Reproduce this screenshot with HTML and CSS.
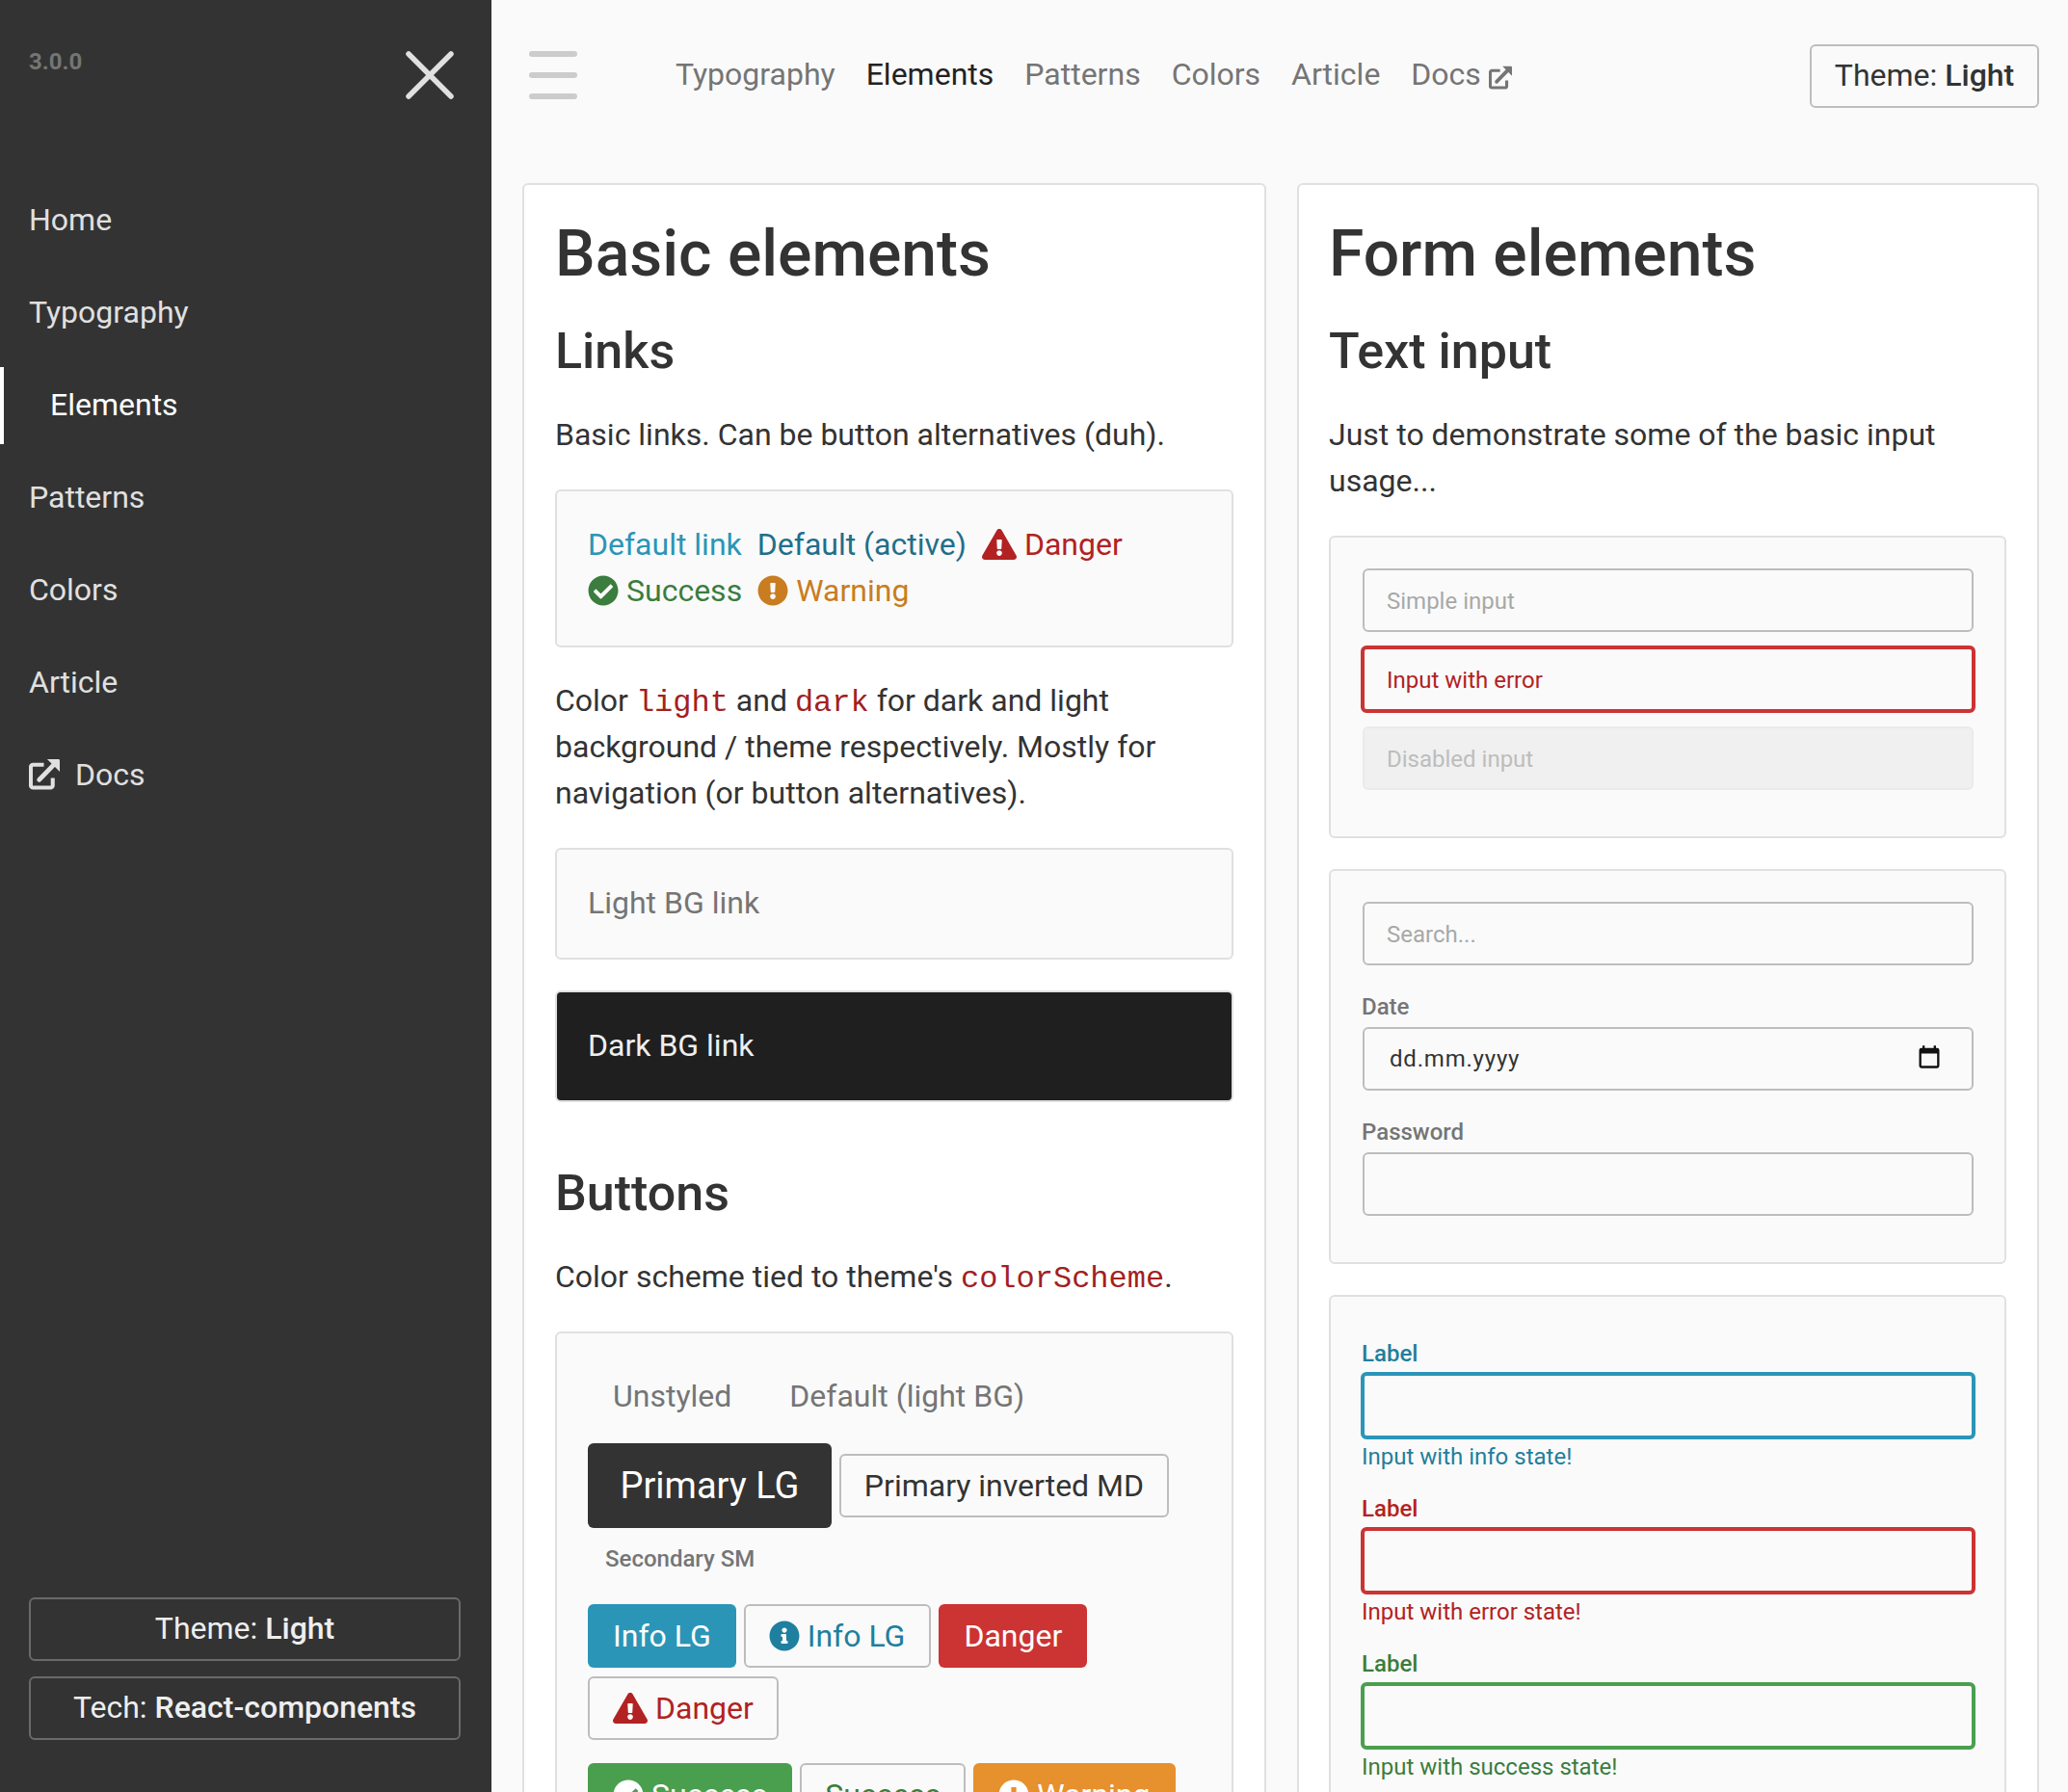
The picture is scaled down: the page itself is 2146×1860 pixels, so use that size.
FILE: index.html
```html
<!DOCTYPE html>
<html lang="en">
<head>
<meta charset="utf-8">
<title>Elements</title>
<link rel="stylesheet" href="styles.css">
</head>
<body>
<svg class="defs" aria-hidden="true">
  <symbol id="i-check" viewBox="0 0 512 512"><path fill="currentColor" d="M504 256c0 136.967-111.033 248-248 248S8 392.967 8 256 119.033 8 256 8s248 111.033 248 248zM227.314 387.314l184-184c6.248-6.248 6.248-16.379 0-22.627l-22.627-22.627c-6.248-6.249-16.379-6.249-22.628 0L216 308.118l-70.059-70.059c-6.248-6.248-16.379-6.248-22.628 0l-22.627 22.627c-6.248 6.248-6.248 16.379 0 22.627l104 104c6.249 6.249 16.379 6.249 22.628.001z"/></symbol>
  <symbol id="i-warn" viewBox="0 0 512 512"><path fill="currentColor" d="M504 256c0 136.997-111.043 248-248 248S8 392.997 8 256C8 119.083 119.043 8 256 8s248 111.083 248 248zm-248 50c-25.405 0-46 20.595-46 46s20.595 46 46 46 46-20.595 46-46-20.595-46-46-46zm-43.673-165.346l7.418 136c.347 6.364 5.609 11.346 11.982 11.346h48.546c6.373 0 11.635-4.982 11.982-11.346l7.418-136c.375-6.874-5.098-12.654-11.982-12.654h-63.383c-6.884 0-12.356 5.78-11.981 12.654z"/></symbol>
  <symbol id="i-tri" viewBox="0 0 576 512"><path fill="currentColor" d="M569.517 440.013C587.975 472.007 564.806 512 527.94 512H48.054c-36.937 0-59.999-40.055-41.577-71.987L246.423 23.985c18.467-32.009 64.72-31.951 83.154 0l239.94 416.028zM288 354c-25.405 0-46 20.595-46 46s20.595 46 46 46 46-20.595 46-46-20.595-46-46-46zm-43.673-165.346l7.418 136c.347 6.364 5.609 11.346 11.982 11.346h48.546c6.373 0 11.635-4.982 11.982-11.346l7.418-136c.375-6.874-5.098-12.654-11.982-12.654h-63.383c-6.884 0-12.356 5.78-11.981 12.654z"/></symbol>
  <symbol id="i-info" viewBox="0 0 512 512"><path fill="currentColor" d="M256 8C119.043 8 8 119.083 8 256c0 136.997 111.043 248 248 248s248-111.003 248-248C504 119.083 392.957 8 256 8zm0 110c23.196 0 42 18.804 42 42s-18.804 42-42 42-42-18.804-42-42 18.804-42 42-42zm56 254c0 6.627-5.373 12-12 12h-88c-6.627 0-12-5.373-12-12v-24c0-6.627 5.373-12 12-12h12v-64h-12c-6.627 0-12-5.373-12-12v-24c0-6.627 5.373-12 12-12h64c6.627 0 12 5.373 12 12v100h12c6.627 0 12 5.373 12 12v24z"/></symbol>
  <symbol id="i-ext" viewBox="0 0 33 34"><path fill="none" stroke="currentColor" stroke-width="4.200" d="M16 7H4.500A2.500 2.500 0 0 0 2 9.500V29A2.500 2.500 0 0 0 4.500 31.500H23A2.500 2.500 0 0 0 25.500 29V21"/><path fill="none" stroke="currentColor" stroke-width="5" stroke-linecap="round" d="M11 23 27 6.500"/><path fill="currentColor" d="M19.500 1H31.500A1.500 1.500 0 0 1 33 2.500V14.500Z"/></symbol>
</svg>
<div class="app">
  <aside class="sidebar">
    <div class="side-top">
      <span class="version">3.0.0</span>
      <svg class="close" viewBox="0 0 50 50" aria-hidden="true"><path d="M3 3 47 47M47 3 3 47"/></svg>
    </div>
    <nav class="side-nav">
      <a class="side-link">Home</a>
      <a class="side-link">Typography</a>
      <a class="side-link active">Elements</a>
      <a class="side-link">Patterns</a>
      <a class="side-link">Colors</a>
      <a class="side-link">Article</a>
      <a class="side-link"><svg class="ic-side"><use href="#i-ext"/></svg>Docs</a>
    </nav>
    <div class="side-bottom">
      <button class="btn side-btn">Theme: <b>Light</b></button>
      <button class="btn side-btn">Tech: <b>React-components</b></button>
    </div>
  </aside>
  <div class="main">
    <header class="topbar">
      <div class="burger"><i></i><i></i><i></i></div>
      <nav class="top-nav">
        <a>Typography</a>
        <a class="current">Elements</a>
        <a>Patterns</a>
        <a>Colors</a>
        <a>Article</a>
        <a class="docs">Docs<svg class="ic-top"><use href="#i-ext"/></svg></a>
      </nav>
      <button class="btn outline theme">Theme: <b>Light</b></button>
    </header>
    <div class="columns">
      <section class="card">
        <h1>Basic elements</h1>
        <h2>Links</h2>
        <p>Basic links. Can be button alternatives (duh).</p>
        <div class="box links">
          <a class="c-info">Default link</a>
          <a class="c-active">Default (active)</a>
          <a class="c-danger"><svg class="ic tri"><use href="#i-tri"/></svg>Danger</a>
          <a class="c-success"><svg class="ic"><use href="#i-check"/></svg>Success</a>
          <a class="c-warning"><svg class="ic"><use href="#i-warn"/></svg>Warning</a>
        </div>
        <p>Color <code>light</code> and <code>dark</code> for dark and light background / theme respectively. Mostly for navigation (or button alternatives).</p>
        <div class="box"><a class="c-muted">Light BG link</a></div>
        <div class="box dark"><a>Dark BG link</a></div>
        <h2 class="h-buttons">Buttons</h2>
        <p>Color scheme tied to theme's <code>colorScheme</code>.</p>
        <div class="box buttons">
          <div class="row r-plain">
            <button class="btn plain">Unstyled</button>
            <button class="btn plain">Default (light BG)</button>
          </div>
          <div class="row r-primary">
            <button class="btn lg primary">Primary LG</button>
            <button class="btn outline">Primary inverted MD</button>
          </div>
          <div class="row r-sm"><button class="btn sm">Secondary SM</button></div>
          <div class="row r-state">
            <button class="btn f-info">Info LG</button>
            <button class="btn outline t-info"><svg class="ic"><use href="#i-info"/></svg>Info LG</button>
            <button class="btn f-danger">Danger</button>
            <button class="btn outline t-danger"><svg class="ic tri"><use href="#i-tri"/></svg>Danger</button>
          </div>
          <div class="row r-state">
            <button class="btn f-success"><svg class="ic"><use href="#i-check"/></svg>Success</button>
            <button class="btn outline t-success">Success</button>
            <button class="btn f-warning"><svg class="ic"><use href="#i-warn"/></svg>Warning</button>
          </div>
        </div>
      </section>
      <section class="card card-form">
        <h1>Form elements</h1>
        <h2>Text input</h2>
        <p>Just to demonstrate some of the basic input usage...</p>
        <div class="box form">
          <input class="input" placeholder="Simple input">
          <input class="input error" placeholder="Input with error">
          <input class="input" placeholder="Disabled input" disabled>
        </div>
        <div class="box form">
          <input class="input search" placeholder="Search...">
          <label class="label">Date</label>
          <div class="input date"><span>dd.mm.yyyy</span>
            <svg class="cal" viewBox="0 0 24 24" aria-hidden="true"><path d="M19 4h-1V2h-2v2H8V2H6v2H5a2 2 0 0 0-2 2v14a2 2 0 0 0 2 2h14a2 2 0 0 0 2-2V6a2 2 0 0 0-2-2zm0 16H5V9h14z"/></svg>
          </div>
          <label class="label">Password</label>
          <input class="input" type="password">
        </div>
        <div class="box form states">
          <div class="field s-info">
            <label class="label">Label</label>
            <input class="input">
            <span class="hint">Input with info state!</span>
          </div>
          <div class="field s-error">
            <label class="label">Label</label>
            <input class="input">
            <span class="hint">Input with error state!</span>
          </div>
          <div class="field s-success">
            <label class="label">Label</label>
            <input class="input">
            <span class="hint">Input with success state!</span>
          </div>
        </div>
      </section>
    </div>
  </div>
</div>
</body>
</html>
```

FILE: styles.css
```css
* { box-sizing: border-box; }
html, body { margin: 0; height: 1860px; overflow: hidden; }
body { background: #fafafa; color: #333; font: 32px/48px Roboto, sans-serif; }
.defs { display: none; }
.app { display: flex; height: 1860px; overflow: hidden; }

.sidebar { flex: 0 0 510px; background: #333; color: #e0e0e0; display: flex; flex-direction: column; padding: 0 32px 54px 0; }
.side-top { display: flex; justify-content: space-between; align-items: flex-start; padding: 41px 0 0 30px; height: 180px; }
.version { font-size: 24px; font-weight: 700; line-height: 46px; color: #757575; }
.close { width: 50px; height: 50px; margin: 12px 7px 0 0; stroke: #e0e0e0; stroke-width: 5.500; stroke-linecap: round; fill: none; }
.side-nav { display: flex; flex-direction: column; gap: 16px; margin-top: 9px; }
.side-link { display: flex; align-items: center; height: 80px; padding: 0 0 2px 30px; color: #e0e0e0; }
.side-link.active { color: #fff; border-left: 4px solid #fff; padding-left: 48px; }
.ic-side { width: 32px; height: 33px; margin: -2px 16px 0 0; }
.side-bottom { margin-top: auto; display: flex; flex-direction: column; gap: 16px; padding-left: 30px; }

.btn { font: inherit; border: 2px solid transparent; border-radius: 6px; background: none; padding: 6px 24px; color: #757575; display: inline-flex; align-items: center; justify-content: center; white-space: nowrap; }
.btn b { font-weight: 500; }
.side-btn { color: #eee; border-color: #6a6a6a; height: 66px; width: 448px; padding: 0 24px 2px; white-space: pre; }
.outline { border-color: #bdbdbd; color: #333; height: 66px; }
.ic { width: 32px; height: 32px; margin-right: 8px; flex: none; }
.ic.tri { width: 36px; }

.main { flex: 1; min-width: 0; padding: 0 30px 0 32px; }
.topbar { height: 190px; display: flex; align-items: flex-start; }
.burger { width: 50px; height: 50px; margin: 53px 0 0 7px; display: flex; flex-direction: column; justify-content: space-between; }
.burger i { display: block; height: 6px; border-radius: 3px; background: #ccc; }
.top-nav { display: flex; gap: 32px; margin: 53px 0 0 102px; color: #757575; }
.top-nav .current { color: #222; }
.docs { display: flex; align-items: center; }
.ic-top { width: 24px; height: 25px; margin: 6px 0 0 8px; }
.theme { margin: 46px 0 0 auto; width: 238px; height: 66px; padding: 0 24px 2px; white-space: pre; }

.columns { display: grid; grid-template-columns: 772px 770px; gap: 32px; align-items: start; }
.card { background: #fff; border: 2px solid #e0e0e0; border-radius: 6px; padding: 32px; min-height: 1700px; }
.card-form { padding-left: 31px; }
h1 { font-size: 66px; line-height: 80px; font-weight: 500; margin: 0 0 31px; }
h2 { font-size: 52px; line-height: 60px; font-weight: 500; margin: 0 0 32px; }
p { margin: 0 0 33px; }
code { font: 32px/1 "Liberation Mono", monospace; color: #a32020; }

.box { background: #fafafa; border: 2px solid #e0e0e0; border-radius: 6px; padding: 31px 32px 33px; margin-bottom: 32px; }
.links { display: flex; flex-wrap: wrap; column-gap: 16px; margin-bottom: 31px; }
.links a { display: flex; align-items: center; }
.dark { background: #1f1f1f; color: #eee; }
.c-muted { color: #757575; }
.c-info { color: #2b95b7; }
.c-active { color: #1f6f8b; }
.c-danger { color: #b22222; }
.c-success { color: #3a7d3e; }
.c-warning { color: #c97d20; }
.h-buttons { margin-top: 65px; }

.buttons { margin-top: 1px; padding: 32px; }
.row { display: flex; flex-wrap: wrap; gap: 9px 8px; align-items: center; }
.plain { height: 66px; }
.r-primary { margin-top: 16px; }
.lg { font-size: 38px; height: 88px; padding: 0 31.500px; }
.primary { background: #333; color: #fff; }
.r-sm { margin: 8px 0 -1px; }
.sm { font-size: 24px; font-weight: 500; height: 48px; padding: 0 16px; }
.r-state { margin: 24px 0 0; }
.r-state .btn { height: 66px; }
.f-info { background: #2b95b7; color: #fff; }
.f-danger { background: #cc3333; color: #fff; }
.f-success { background: #4a9f4f; color: #fff; }
.f-warning { background: #e6902e; color: #fff; }
.btn.t-info { color: #1f7f9e; padding-right: 25px; }
.btn.t-danger { color: #b22222; }
.btn.t-success { color: #3a7d3e; }

.form { display: flex; flex-direction: column; padding: 32px 32px 48px 33px; }
.input { display: flex; align-items: center; width: 100%; height: 66px; font: 24px/36px Roboto, sans-serif; color: #333; background: #fafafa; border: 2px solid #bdbdbd; border-radius: 6px; padding: 2px 23px 0; margin: 0 0 16px; outline: none; }
.input::placeholder { color: #a8a8a8; opacity: 1; }
.form > .input:last-child { margin-bottom: 0; }
.input.error { border: 4px solid #cc3333; height: 70px; width: calc(100% + 4px); margin: -2px -2px 14px; padding: 2px 23px 0; }
.input.error::placeholder { color: #b22222; }
.input:disabled { background: #f0f0f0; border-color: #eaeaea; }
.input:disabled::placeholder { color: #bdbdbd; }
.input.search { margin-bottom: 17px; }
.label { font-size: 24px; line-height: 36px; font-weight: 500; color: #757575; margin: 8px 0 3px -1px; }
.date { justify-content: space-between; padding: 0 30px 0 26px; letter-spacing: .8px; color: #333; margin-bottom: 17px; }
.cal { width: 28px; height: 28px; fill: #111; margin-top: -5px; }
.states { gap: 18px; padding-top: 41px; }
.field { display: flex; flex-direction: column; }
.field .label { margin: 0 0 1px -1px; color: inherit; }
.field .input { width: calc(100% + 4px); height: 70px; border-width: 4px; margin: 0 -2px; }
.hint { font-size: 24px; line-height: 36px; margin-left: -1px; }
.s-info { color: #1f7f9e; }
.s-info .input { border-color: #2b95b7; }
.s-error { color: #b22222; }
.s-error .input { border-color: #cc3333; }
.s-success { color: #3a7d3e; }
.s-success .input { border-color: #4a9f4f; }
```
